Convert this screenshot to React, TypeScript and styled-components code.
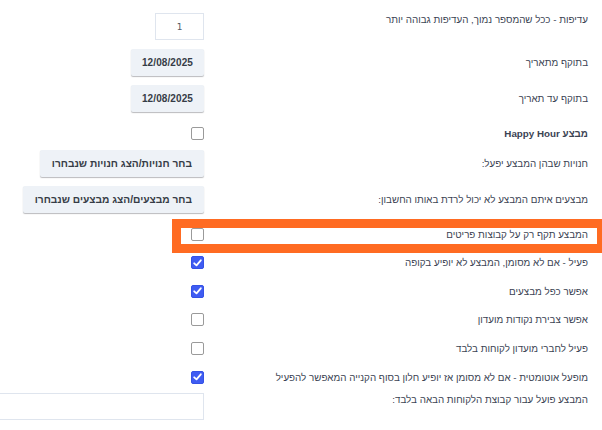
import React from "react";
import styled, { createGlobalStyle, css } from "styled-components";

const GlobalStyle = createGlobalStyle`
    html, body {
        margin: 0;
        padding: 0;
        background: #ffffff;
        overflow: hidden;
    }
    body {
        font-family: "Liberation Sans", Arial, sans-serif;
    }
`;

type RowKind = "field" | "check";

const Form = styled.div`
    direction: rtl;
    width: 602px;
    padding: 13px 14px 0 0;
    box-sizing: border-box;
    display: flex;
    flex-direction: column;
`;

const Row = styled.div<{ $kind: RowKind; $top?: boolean }>`
    position: relative;
    display: grid;
    grid-template-columns: 378px 204px;
    column-gap: 6px;
    align-items: ${(p) => (p.$top ? "start" : "center")};
    margin-top: ${(p) => (p.$kind === "check" ? "14.6px" : "9px")};
    min-height: ${(p) => (p.$kind === "check" ? "14px" : "27px")};
    &:first-child {
        margin-top: 0;
    }
`;

const Label = styled.div<{ $bold?: boolean }>`
    font-size: 9.8px;
    line-height: 13px;
    color: #3b4353;
    font-weight: ${(p) => (p.$bold ? 700 : 400)};
    white-space: nowrap;
    text-align: right;
`;

const Control = styled.div`
    display: flex;
    justify-content: flex-start;
    align-items: center;
`;

const TextInput = styled.div<{ $wide?: boolean }>`
    box-sizing: border-box;
    height: 27px;
    width: ${(p) => (p.$wide ? "230px" : "49px")};
    flex-shrink: 0;
    border: 1px solid #dfe5ee;
    background: #ffffff;
    display: flex;
    align-items: center;
    justify-content: center;
    font-family: "DejaVu Sans", sans-serif;
    font-size: 9px;
    color: #555c66;
`;

const Button = styled.div`
    box-sizing: border-box;
    height: 27px;
    padding: 0 12px;
    display: flex;
    align-items: center;
    background: #eef2f7;
    border-radius: 2px;
    box-shadow: 0 1px 1px rgba(60, 60, 70, 0.35);
    font-size: 10.2px;
    font-weight: 700;
    color: #363c46;
    white-space: nowrap;
`;

const DateButton = styled(Button)`
    padding: 0 11px;
    font-size: 10px;
    letter-spacing: 0.1px;
`;

const Box = styled.span<{ $checked?: boolean }>`
    box-sizing: border-box;
    width: 13px;
    height: 13px;
    border-radius: 2px;
    display: inline-flex;
    align-items: center;
    justify-content: center;
    ${(p) =>
        p.$checked
            ? css`
                  background: #3f5cf2;
                  border: 1px solid #3552e6;
              `
            : css`
                  background: #ffffff;
                  border: 1px solid #9a9a9a;
              `}
`;

const Highlight = styled.div`
    position: absolute;
    left: 172px;
    right: -18px;
    top: -8px;
    bottom: -12px;
    border: 9px solid #ff6b22;
    pointer-events: none;
`;

function Checkbox({ checked }: { checked?: boolean }) {
    return (
        <Box $checked={checked}>
            {checked && (
                <svg width="9" height="8" viewBox="0 0 9 8">
                    <path
                        d="M1.2 4.3 L3.5 6.4 L7.8 1.3"
                        fill="none"
                        stroke="#ffffff"
                        strokeWidth="1.8"
                        strokeLinecap="round"
                        strokeLinejoin="round"
                    />
                </svg>
            )}
        </Box>
    );
}

const checks = [
    { label: "פעיל - אם לא מסומן, המבצע לא יופיע בקופה", checked: true },
    { label: "אפשר כפל מבצעים", checked: true },
    { label: "אפשר צבירת נקודות מועדון", checked: false },
    { label: "פעיל לחברי מועדון לקוחות בלבד", checked: false },
    {
        label: "מופעל אוטומטית - אם לא מסומן אז יופיע חלון בסוף הקנייה המאפשר להפעיל",
        checked: true,
    },
];

export default function App() {
    return (
        <>
            <GlobalStyle />
            <Form>
                <Row $kind="field" $top>
                    <Label>עדיפות - ככל שהמספר נמוך, העדיפות גבוהה יותר</Label>
                    <Control>
                        <TextInput>1</TextInput>
                    </Control>
                </Row>
                <Row $kind="field">
                    <Label>בתוקף מתאריך</Label>
                    <Control>
                        <DateButton>12/08/2025</DateButton>
                    </Control>
                </Row>
                <Row $kind="field">
                    <Label>בתוקף עד תאריך</Label>
                    <Control>
                        <DateButton>12/08/2025</DateButton>
                    </Control>
                </Row>
                <Row $kind="check">
                    <Label $bold>מבצע Happy Hour</Label>
                    <Control>
                        <Checkbox />
                    </Control>
                </Row>
                <Row $kind="field">
                    <Label>חנויות שבהן המבצע יפעל:</Label>
                    <Control>
                        <Button>בחר חנויות/הצג חנויות שנבחרו</Button>
                    </Control>
                </Row>
                <Row $kind="field">
                    <Label>מבצעים איתם המבצע לא יכול לרדת באותו החשבון:</Label>
                    <Control>
                        <Button>בחר מבצעים/הצג מבצעים שנבחרו</Button>
                    </Control>
                </Row>
                <Row $kind="check">
                    <Label>המבצע תקף רק על קבוצות פריטים</Label>
                    <Control>
                        <Checkbox />
                    </Control>
                    <Highlight />
                </Row>
                {checks.map((c) => (
                    <Row $kind="check" key={c.label}>
                        <Label>{c.label}</Label>
                        <Control>
                            <Checkbox checked={c.checked} />
                        </Control>
                    </Row>
                ))}
                <Row $kind="field" $top>
                    <Label>המבצע פועל עבור קבוצת הלקוחות הבאה בלבד:</Label>
                    <Control>
                        <TextInput $wide />
                    </Control>
                </Row>
            </Form>
        </>
    );
}
